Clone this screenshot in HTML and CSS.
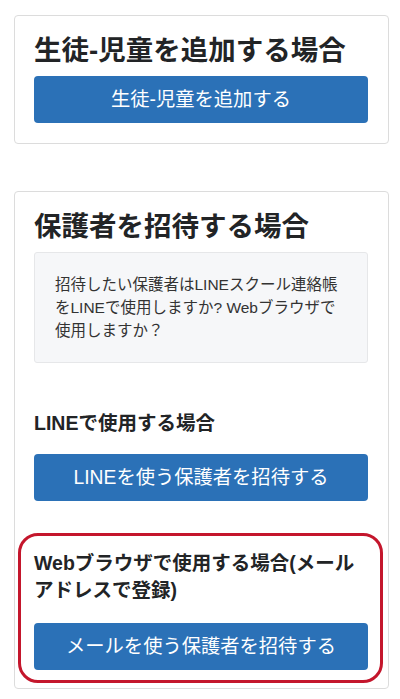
FILE: index.html
```html
<!DOCTYPE html>
<html lang="ja">
<head>
<meta charset="utf-8">
<title>招待</title>
<link rel="stylesheet" href="styles.css">
</head>
<body>
<main class="page">
  <section class="card">
    <h2 class="card-title">生徒-児童を追加する場合</h2>
    <a class="btn" href="#">生徒-児童を追加する</a>
  </section>

  <section class="card card-invite">
    <h2 class="card-title">保護者を招待する場合</h2>
    <div class="info">招待したい保護者はLINEスクール連絡帳をLINEで使用しますか? Webブラウザで使用しますか？</div>
    <h3 class="sub-title sub-line">LINEで使用する場合</h3>
    <a class="btn" href="#">LINEを使う保護者を招待する</a>
    <div class="highlight">
      <h3 class="sub-title sub-web">Webブラウザで使用する場合(メールアドレスで登録)</h3>
      <a class="btn" href="#">メールを使う保護者を招待する</a>
    </div>
  </section>
</main>
</body>
</html>
```

FILE: styles.css
```css
* { box-sizing: border-box; }

html, body {
  margin: 0;
  padding: 0;
  background: #ffffff;
}

body {
  font-family: "Liberation Sans", "Noto Sans CJK JP", sans-serif;
  color: #222426;
}

.page {
  padding: 15px 11px 0 14px;
  display: flex;
  flex-direction: column;
  gap: 47px;
}

.card {
  width: 375px;
  border: 1px solid #dcdcdc;
  border-radius: 4px;
  padding: 20px 20px 20px 19px;
  display: flex;
  flex-direction: column;
}

.card-title {
  margin: 0 0 11px 0;
  font-size: 27.5px;
  line-height: 29px;
  font-weight: 700;
  color: #222426;
}

.btn {
  display: block;
  height: 47px;
  line-height: 47px;
  text-align: center;
  background: #2b71b7;
  color: #ffffff;
  font-size: 19.3px;
  border-radius: 4px;
  text-decoration: none;
}

.info {
  background: #f6f7f9;
  border: 1px solid #e6e7e9;
  border-radius: 3px;
  padding: 20px 20px;
  font-size: 15.5px;
  line-height: 23px;
  color: #333;
}

.sub-title {
  margin: 0;
  font-size: 19.5px;
  line-height: 27px;
  font-weight: 700;
  color: #222426;
}

.sub-line {
  margin-top: 46.5px;
  margin-bottom: 17.5px;
}

.highlight {
  margin: 32px -14.5px -14.5px -16px;
  border: 3px solid #c4162c;
  border-radius: 20px;
  padding: 13.5px 11.5px 10px 13px;
}

.sub-web {
  margin-bottom: 19px;
}
```
